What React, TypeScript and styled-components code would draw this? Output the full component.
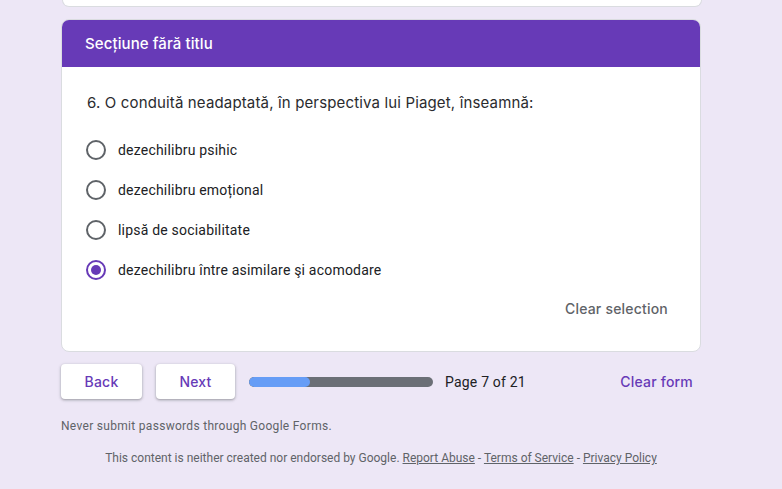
import React from "react";
import styled, { createGlobalStyle } from "styled-components";

const Global = createGlobalStyle`
  html, body { margin: 0; padding: 0; background: #ede7f6; }
  body { font-family: Roboto, "Liberation Sans", Arial, sans-serif; overflow: hidden; }
`;

const Page = styled.div`
  width: 782px;
  height: 489px;
  overflow: hidden;
  box-sizing: border-box;
  padding-left: 61px;
  background: #ede7f6;
`;

const Column = styled.div`
  width: 640px;
  display: flex;
  flex-direction: column;
`;

const PrevCard = styled.div`
  margin-left: 1px;
  width: 638px;
  height: 6px;
  background: #fff;
  border: 1px solid #dadce0;
  border-top: none;
  border-radius: 0 0 8px 8px;
`;

const Card = styled.div`
  margin-top: 12px;
  background: #fff;
  border: 1px solid #dadce0;
  border-radius: 8px;
  overflow: hidden;
`;

const Header = styled.div`
  height: 48px;
  background: #673ab7;
  margin: -1px -1px 0;
  display: flex;
  align-items: center;
  padding-left: 24px;
  color: #fff;
  font-family: Inter, "Open Sans", sans-serif;
  font-size: 15px;
  font-weight: 500;
  letter-spacing: 0.1px;
`;

const Body = styled.div`
  padding: 24px 32px 25px 24px;
  display: flex;
  flex-direction: column;
`;

const Question = styled.div`
  font-family: Inter, "Open Sans", sans-serif;
  font-size: 15px;
  line-height: 24px;
  color: #2a2b2e;
  letter-spacing: 0.15px;
  margin-left: 1px;
  margin-bottom: 15px;
`;

const Option = styled.label`
  display: flex;
  align-items: center;
  height: 40px;
  gap: 12px;
  font-size: 14px;
  color: #202124;
  letter-spacing: 0.2px;
`;

const Radio = styled.span<{ $checked?: boolean }>`
  box-sizing: border-box;
  width: 20px;
  height: 20px;
  border-radius: 50%;
  border: 2px solid ${(p) => (p.$checked ? "#673ab7" : "#5f6368")};
  display: flex;
  align-items: center;
  justify-content: center;
  &::after {
    content: "";
    width: 10px;
    height: 10px;
    border-radius: 50%;
    background: #673ab7;
    display: ${(p) => (p.$checked ? "block" : "none")};
  }
`;

const ClearRow = styled.div`
  display: flex;
  justify-content: flex-end;
  height: 36px;
  align-items: center;
`;

const TextButton = styled.span<{ $purple?: boolean }>`
  font-family: Inter, "Open Sans", sans-serif;
  font-size: 14px;
  font-weight: 500;
  letter-spacing: 0.2px;
  color: ${(p) => (p.$purple ? "#673ab7" : "#5f6368")};
`;

const Nav = styled.div`
  margin-top: 12px;
  display: flex;
  align-items: center;
  height: 35px;
`;

const NavButton = styled.div<{ $w: number }>`
  width: ${(p) => p.$w}px;
  height: 35px;
  background: #fff;
  border-radius: 4px;
  box-shadow: 0 1px 2px rgba(60, 64, 67, 0.3), 0 1px 3px 1px rgba(60, 64, 67, 0.15);
  display: flex;
  align-items: center;
  justify-content: center;
  margin-right: 14px;
  font-family: Inter, "Open Sans", sans-serif;
  font-size: 14px;
  font-weight: 500;
  color: #673ab7;
  letter-spacing: 0.2px;
`;

const Progress = styled.div`
  width: 184px;
  height: 10px;
  border-radius: 5px;
  background: #6b6f76;
  overflow: hidden;
  margin-right: 12px;
`;

const Fill = styled.div`
  height: 100%;
  background: #669df6;
  border-radius: 5px;
`;

const PageText = styled.span`
  font-size: 14px;
  color: #202124;
  letter-spacing: 0.2px;
`;

const Spacer = styled.div`
  flex: 1;
`;

const ClearForm = styled(TextButton)`
  margin-right: 8px;
`;

const Note = styled.div`
  margin-top: 19px;
  font-size: 12px;
  color: #5f6368;
  line-height: 16px;
  letter-spacing: 0.3px;
`;

const Disclaimer = styled.div`
  margin-top: 16px;
  text-align: center;
  font-size: 12px;
  color: #5f6368;
  line-height: 16px;
  a {
    color: #5f6368;
    text-decoration: underline;
  }
`;

const Logo = styled.div`
  margin-top: 18px;
  text-align: center;
  font-family: "Open Sans", sans-serif;
  font-size: 22px;
  color: #5f6368;
  line-height: 28px;
`;

const options = [
  "dezechilibru psihic",
  "dezechilibru emoțional",
  "lipsă de sociabilitate",
  "dezechilibru între asimilare şi acomodare",
];

export default function App() {
  const progress = (7 / 21) * 100;
  return (
    <Page>
      <Global />
      <Column>
        <PrevCard />
        <Card>
          <Header>Secțiune fără titlu</Header>
          <Body>
            <Question>6. O conduită neadaptată, în perspectiva lui Piaget, înseamnă:</Question>
            {options.map((o, i) => (
              <Option key={o}>
                <Radio $checked={i === 3} />
                {o}
              </Option>
            ))}
            <ClearRow>
              <TextButton>Clear selection</TextButton>
            </ClearRow>
          </Body>
        </Card>
        <Nav>
          <NavButton $w={81}>Back</NavButton>
          <NavButton $w={79}>Next</NavButton>
          <Progress>
            <Fill style={{ width: `${progress}%` }} />
          </Progress>
          <PageText>Page 7 of 21</PageText>
          <Spacer />
          <ClearForm $purple>Clear form</ClearForm>
        </Nav>
        <Note>Never submit passwords through Google Forms.</Note>
        <Disclaimer>
          This content is neither created nor endorsed by Google. <a>Report Abuse</a> - <a>Terms of Service</a> - <a>Privacy Policy</a>
        </Disclaimer>
        <Logo>Google Forms</Logo>
      </Column>
    </Page>
  );
}
